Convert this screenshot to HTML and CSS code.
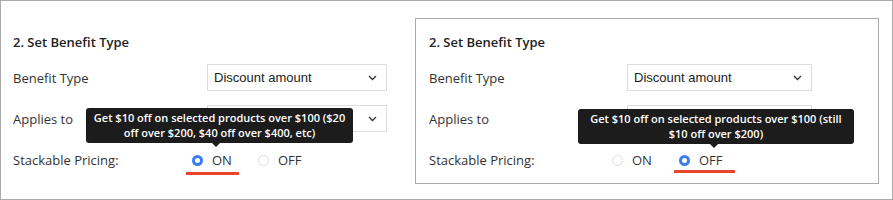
FILE: index.html
```html
<!DOCTYPE html>
<html lang="en">
<head>
  <meta charset="UTF-8" />
  <title>Stackable pricing</title>
  <link rel="stylesheet" href="styles.css">
</head>
<body>
  <div class="frame">
    <section class="panel panel-left">
      <h3>2. Set Benefit Type</h3>
      <div class="field-row">
        <span class="label">Benefit Type</span>
        <div class="select">Discount amount
          <svg class="chevron" width="9" height="6" viewBox="0 0 9 6"><path d="M1 1 L4.5 4.5 L8 1" fill="none" stroke="#333" stroke-width="1.3"/></svg>
        </div>
      </div>
      <div class="field-row">
        <span class="label">Applies to</span>
        <div class="select">
          <svg class="chevron" width="9" height="6" viewBox="0 0 9 6"><path d="M1 1 L4.5 4.5 L8 1" fill="none" stroke="#333" stroke-width="1.3"/></svg>
        </div>
      </div>
      <div class="radio-row">
        <span class="label">Stackable Pricing:</span>
        <span class="option checked marked">
          <i class="dot"></i>ON
          <span class="tip">Get $10 off on selected products over $100 ($20<br>off over $200, $40 off over $400, etc)</span>
        </span>
        <span class="option"><i class="dot"></i>OFF</span>
      </div>
    </section>

    <section class="panel panel-right">
      <h3>2. Set Benefit Type</h3>
      <div class="field-row">
        <span class="label">Benefit Type</span>
        <div class="select">Discount amount
          <svg class="chevron" width="9" height="6" viewBox="0 0 9 6"><path d="M1 1 L4.5 4.5 L8 1" fill="none" stroke="#333" stroke-width="1.3"/></svg>
        </div>
      </div>
      <div class="field-row">
        <span class="label">Applies to</span>
        <div class="select">
          <svg class="chevron" width="9" height="6" viewBox="0 0 9 6"><path d="M1 1 L4.5 4.5 L8 1" fill="none" stroke="#333" stroke-width="1.3"/></svg>
        </div>
      </div>
      <div class="radio-row">
        <span class="label">Stackable Pricing:</span>
        <span class="option"><i class="dot"></i>ON</span>
        <span class="option checked marked">
          <i class="dot"></i>OFF
          <span class="tip">Get $10 off on selected products over $100 (still<br>$10 off over $200)</span>
        </span>
      </div>
    </section>
  </div>
</body>
</html>
```

FILE: styles.css
```css
body {
  margin: 0;
  font-family: 'Open Sans', 'Noto Sans', sans-serif;
  background: #fff;
  color: #333;
}

.frame {
  width: 893px;
  height: 200px;
  box-sizing: border-box;
  border: 1px solid #aaa;
  padding: 17px 12px 15px 0;
  display: flex;
}

.panel {
  box-sizing: border-box;
  border: 1px solid transparent;
  padding: 14px 11px 0;
}

.panel-left {
  width: 414px;
}

.panel-right {
  width: 464px;
  border-color: #aaa;
  padding-left: 13px;
}

.panel h3 {
  margin: 0 0 13px;
  font-size: 13px;
  font-weight: 600;
  line-height: 18px;
  color: #222;
}

.label {
  font-size: 13px;
  line-height: 18px;
}

.field-row {
  display: grid;
  grid-template-columns: 194px 180px;
  align-items: center;
  margin-bottom: 14px;
}

.panel-right .field-row {
  grid-template-columns: 198px 185px;
}

.select {
  height: 27px;
  box-sizing: border-box;
  border: 1px solid #ddd;
  padding: 0 9px 0 6px;
  display: flex;
  align-items: center;
  justify-content: space-between;
  font-family: 'Liberation Sans', Arial, sans-serif;
  font-size: 13px;
  color: #222;
}

.chevron {
  margin-left: auto;
}

.radio-row {
  display: flex;
  align-items: center;
  height: 28px;
}

.radio-row .label {
  width: 179px;
}

.panel-right .radio-row {
  margin-top: 3px;
}

.panel-right .radio-row .label {
  width: 183px;
}

.option {
  position: relative;
  display: inline-flex;
  align-items: center;
  font-size: 13px;
  line-height: 18px;
  color: #333;
  margin-right: 26px;
}

.panel-right .option {
  margin-right: 27px;
}

.dot {
  width: 11px;
  height: 11px;
  box-sizing: border-box;
  border-radius: 50%;
  border: 1px solid #ddd;
  background: #fff;
  margin-right: 9px;
}

.checked .dot {
  border: 3.5px solid #3b7cf2;
  background: #fff;
}

.marked::after {
  content: '';
  position: absolute;
  left: -6px;
  right: -7px;
  top: 21px;
  height: 3px;
  background: #e8452c;
}

.panel-right .marked::after {
  left: -5px;
  right: -13px;
  top: 19px;
}

.tip {
  position: absolute;
  bottom: calc(100% + 8px);
  left: -106px;
  width: 267px;
  box-sizing: border-box;
  padding: 2px 0 3px;
  background: #1c1c1c;
  border-radius: 3px;
  color: #fff;
  font-size: 11px;
  font-weight: 600;
  line-height: 15px;
  text-align: center;
  white-space: nowrap;
}

.tip::after {
  content: '';
  position: absolute;
  top: 100%;
  left: 126px;
  border: 4px solid transparent;
  border-top-color: #1c1c1c;
  border-bottom: 0;
}

.panel-right .tip {
  left: -101px;
  width: 276px;
  bottom: calc(100% + 7px);
}

.panel-right .tip::after {
  left: 132px;
}
```
